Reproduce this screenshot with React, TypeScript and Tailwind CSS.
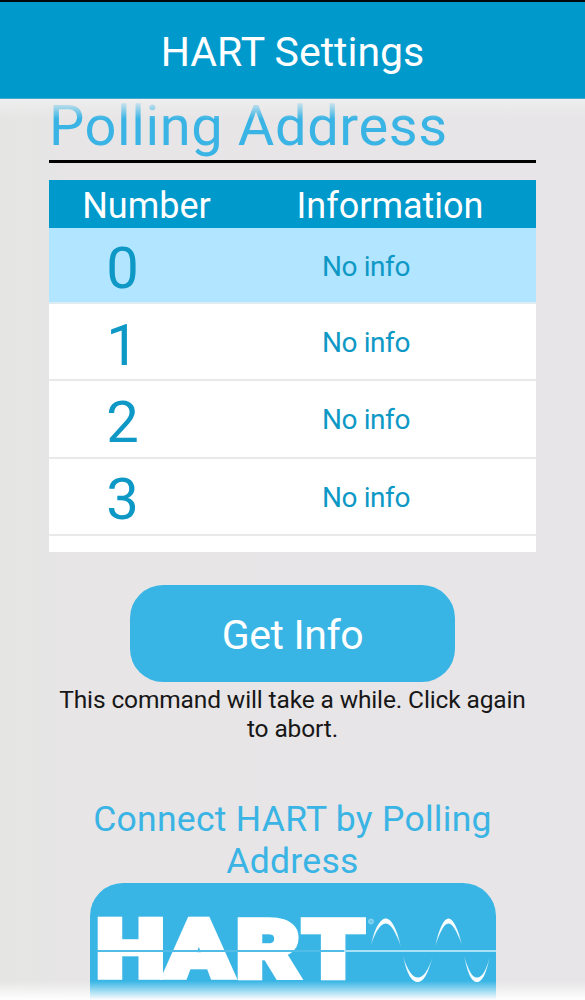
const rows = ["0", "1", "2", "3"];

function HartLogo() {
  return (
    <svg viewBox="0 0 406 117" className="block h-[117px] w-[406px]">
      <defs>
        <linearGradient id="crest" x1="0" y1="0" x2="0" y2="1">
          <stop offset="0" stopColor="#fff" />
          <stop offset="0.6" stopColor="#fff" stopOpacity="0.9" />
          <stop offset="1" stopColor="#fff" stopOpacity="0.3" />
        </linearGradient>
        <linearGradient id="trough" x1="0" y1="1" x2="0" y2="0">
          <stop offset="0" stopColor="#fff" />
          <stop offset="0.6" stopColor="#fff" stopOpacity="0.9" />
          <stop offset="1" stopColor="#fff" stopOpacity="0.3" />
        </linearGradient>
      </defs>
      <text
        transform="translate(0 94) scale(1.22 1)"
        x="5.400 62.200 120 174.500"
        y="0"
        fontSize="79"
        fontWeight="900"
        fill="#fff"
        stroke="#fff"
        strokeWidth="6.5"
        className="font-['Roboto']"
      >
        HART
      </text>
      <path d="M7 68H255" stroke="#4fbde8" strokeWidth="2" />
      <path d="M254 68H406" stroke="#a8e1f6" strokeWidth="2" />
      <circle cx="281" cy="38.500" r="2.500" fill="#6fcaec" stroke="#91d7f1" />
      <path d="M281 62C285 43 291 35.500 296 35.500S307 45 311 64C306 50 301 40.500 296 40.500S286 47 281 62Z" fill="url(#crest)" />
      <path d="M345 64C349 45 354 35.500 358.500 35.500S368 45 372 62C367 49 363 40.500 358.500 40.500S350 49 345 64Z" fill="url(#crest)" />
      <path d="M313 73C317 92 322 99 328 99S338 90 343 73C338 88 333 94.500 328 94.500S318 89 313 73Z" fill="url(#trough)" />
      <path d="M374 73C378 92 382 99 387 99S396 92 400 73C396 88 392 94.500 387 94.500S379 88 374 73Z" fill="url(#trough)" />
    </svg>
  );
}

export default function App() {
  return (
    <div className="relative flex h-[1000px] w-[585px] flex-col overflow-hidden bg-[linear-gradient(90deg,#e5e6e4_0,#e7e5e6_70px,#e7e5e7_100%)] font-['Roboto',sans-serif]">
      <header className="flex h-[99px] shrink-0 items-center justify-center border-t-2 border-b border-t-[#05080b] border-b-[#48a9cf] bg-[#0099cc] pt-[3px]">
        <h1 className="text-[41px] leading-[48px] text-white">HART Settings</h1>
      </header>

      <main className="flex h-[901px] flex-col items-center">
        <section className="w-[487px] shrink-0">
          <h2 className="flex h-[64px] items-end border-b-[3px] border-black pb-[6px] text-[56px] leading-[55px] tracking-[0.6px] whitespace-nowrap text-[#39b4e4]">
            Polling Address
          </h2>
        </section>

        <section className="mt-[17px] h-[372px] w-[487px] shrink-0 overflow-hidden bg-white text-[#0e98c5]">
          <div className="flex h-[48px] items-center bg-[#0099cc] pt-[3px] text-[36px] leading-[44px] text-white">
            <div className="w-[195px] text-center">Number</div>
            <div className="w-[292px] text-center">Information</div>
          </div>
          {rows.map((n, i) => (
            <div
              key={n}
              className={`flex items-center border-b-2 ${i === 0 ? "h-[76px] border-[#dcecf2] bg-[#b2e5ff]" : "h-[77.25px] border-[#e9e9e9] bg-white"}`}
            >
              <div className="w-[147px] pt-[6px] text-center text-[58px] leading-[68px]">{n}</div>
              <div className="w-[340px] pt-[3px] text-center text-[28px] tracking-[-0.4px]">No info</div>
            </div>
          ))}
        </section>

        <button className="mt-[33px] h-[97px] w-[325px] shrink-0 rounded-[33px] bg-[#39b5e5] pt-[4px] text-[41px] tracking-[-0.4px] text-white">
          Get Info
        </button>
        <p className="mt-[4px] w-[487px] shrink-0 text-center text-[24.5px] leading-[28.5px] tracking-[-0.13px] text-[#171717]">
          This command will take a while. Click again
          <br />
          to abort.
        </p>

        <h3 className="mt-[55px] shrink-0 text-center text-[35.5px] leading-[42px] tracking-[0.28px] text-[#39b4e4]">
          Connect HART by Polling
          <br />
          Address
        </h3>
        <div className="mt-[1px] h-[117px] w-[406px] shrink-0 overflow-hidden rounded-t-[33px] bg-[#39b5e5]">
          <HartLogo />
        </div>
      </main>

      <div className="absolute inset-x-0 top-[99px] h-[20px] bg-linear-to-b from-[#eeeeee] to-[#eeeeee]/0" />
      <div className="absolute inset-x-0 bottom-0 h-[19px] bg-linear-to-b from-white/0 to-white" />
    </div>
  );
}
